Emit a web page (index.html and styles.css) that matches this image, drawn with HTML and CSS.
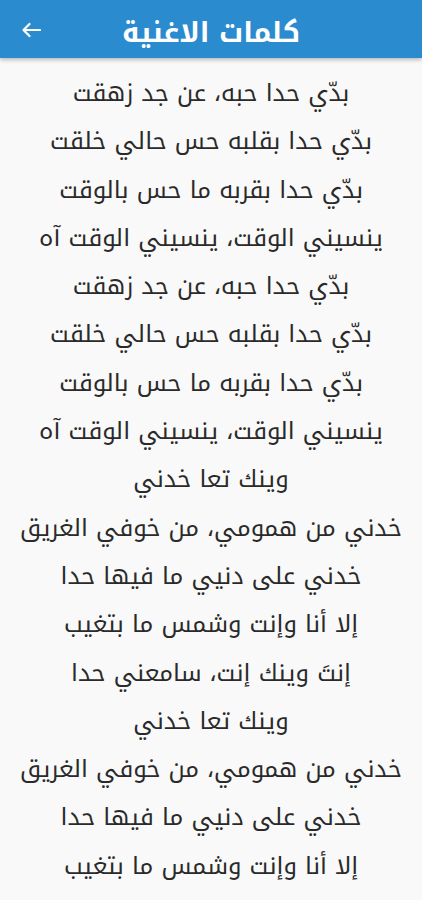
FILE: index.html
```html
<!DOCTYPE html>
<html lang="ar" dir="rtl">
<head>
<meta charset="utf-8">
<link rel="stylesheet" href="styles.css">
</head>
<body>
<header class="appbar">
  <span class="title">كلمات الاغنية</span>
  <button class="back" aria-label="back">
    <svg width="20" height="16" viewBox="0 0 20 16"><path d="M19 8H2.5M8.5 2L2.5 8l6 6" fill="none" stroke="#fff" stroke-width="2.2" stroke-linecap="round" stroke-linejoin="round"/></svg>
  </button>
</header>
<main class="lyrics">
  <p>بدّي حدا حبه، عن جد زهقت</p>
  <p>بدّي حدا بقلبه حس حالي خلقت</p>
  <p>بدّي حدا بقربه ما حس بالوقت</p>
  <p>ينسيني الوقت، ينسيني الوقت آه</p>
  <p>بدّي حدا حبه، عن جد زهقت</p>
  <p>بدّي حدا بقلبه حس حالي خلقت</p>
  <p>بدّي حدا بقربه ما حس بالوقت</p>
  <p>ينسيني الوقت، ينسيني الوقت آه</p>
  <p>وينك تعا خدني</p>
  <p>خدني من همومي، من خوفي الغريق</p>
  <p>خدني على دنيي ما فيها حدا</p>
  <p>إلا أنا وإنت وشمس ما بتغيب</p>
  <p>إنتَ وينك إنت، سامعني حدا</p>
  <p>وينك تعا خدني</p>
  <p>خدني من همومي، من خوفي الغريق</p>
  <p>خدني على دنيي ما فيها حدا</p>
  <p>إلا أنا وإنت وشمس ما بتغيب</p>
</main>
</body>
</html>
```
FILE: styles.css
```css
html, body {
  margin: 0;
  padding: 0;
}
body {
  background: #f9f9f9;
  font-family: "Noto Kufi Arabic", "Noto Sans Arabic", "DejaVu Sans", "Noto Sans", sans-serif;
  overflow: hidden;
}
.appbar {
  position: relative;
  height: 58px;
  background: #2b8bcf;
  display: flex;
  align-items: center;
  justify-content: center;
  box-shadow: 0 2px 4px rgba(0,0,0,0.25);
}
.title {
  color: #fff;
  font-size: 28px;
  font-weight: bold;
  line-height: 58px;
  padding-top: 8px;
}
.back {
  position: absolute;
  left: 21px;
  top: 22px;
  background: none;
  border: 0;
  padding: 0;
  width: 20px;
  height: 16px;
  display: block;
}
.back svg {
  display: block;
}
.lyrics {
  padding-top: 11px;
  text-align: center;
  color: #2a2a2a;
}
.lyrics p {
  margin: 0;
  height: 48.3px;
  line-height: 48.3px;
  font-size: 24px;
  white-space: nowrap;
}
```
